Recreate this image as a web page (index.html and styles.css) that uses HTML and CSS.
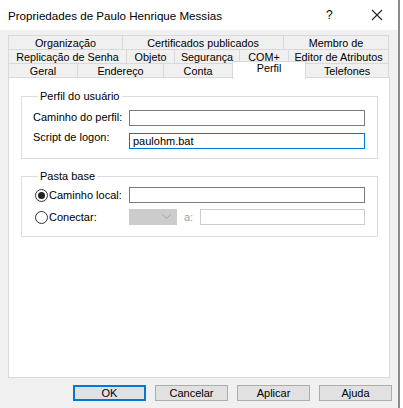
FILE: index.html
```html
<!DOCTYPE html>
<html lang="pt-BR">
<head>
<meta charset="utf-8">
<title>Propriedades de Paulo Henrique Messias</title>
<link rel="stylesheet" href="styles.css">
</head>
<body>
<div class="window">
  <div class="titlebar">
    <span class="title">Propriedades de Paulo Henrique Messias</span>
    <span class="help">?</span>
    <span class="close">
      <svg width="12" height="12" viewBox="0 0 12 12"><path d="M1 1 L11 11 M11 1 L1 11" stroke="#222" stroke-width="1.1" fill="none"/></svg>
    </span>
  </div>
  <div class="body">
    <div class="tabs">
      <div class="tabrow">
        <div class="tab w114">Organização</div>
        <div class="tab w162">Certificados publicados</div>
        <div class="tab w106">Membro de</div>
      </div>
      <div class="tabrow">
        <div class="tab w118">Replicação de Senha</div>
        <div class="tab w49">Objeto</div>
        <div class="tab w66">Segurança</div>
        <div class="tab w50">COM+</div>
        <div class="tab w101">Editor de Atributos</div>
      </div>
      <div class="tabrow">
        <div class="tab w69">Geral</div>
        <div class="tab w87">Endereço</div>
        <div class="tab w70">Conta</div>
        <div class="tab w74 active">Perfil</div>
        <div class="tab w84">Telefones</div>
      </div>
    </div>
    <div class="panel">
      <fieldset class="group g1">
        <legend>Perfil do usuário</legend>
        <div class="row">
          <span class="label">Caminho do perfil:</span>
          <span class="input dark"></span>
        </div>
        <div class="row r2">
          <span class="label raised">Script de logon:</span>
          <span class="input focus">paulohm.bat</span>
        </div>
      </fieldset>
      <fieldset class="group g2">
        <legend>Pasta base</legend>
        <div class="row">
          <span class="label radio-label"><span class="radio checked"></span>Caminho local:</span>
          <span class="input dark"></span>
        </div>
        <div class="row r2">
          <span class="label radio-label"><span class="radio"></span>Conectar:</span>
          <span class="combo">
            <svg width="9" height="6" viewBox="0 0 9 6"><path d="M0.5 0.5 L4.5 4.5 L8.5 0.5" stroke="#a6a6a6" stroke-width="1" fill="none"/></svg>
          </span>
          <span class="a-label">a:</span>
          <span class="input disabled"></span>
        </div>
      </fieldset>
    </div>
    <div class="buttons">
      <span class="btn default">OK</span>
      <span class="btn">Cancelar</span>
      <span class="btn">Aplicar</span>
      <span class="btn">Ajuda</span>
    </div>
  </div>
</div>
</body>
</html>
```
FILE: styles.css
```css
html, body {
  margin: 0;
  padding: 0;
  background: #ffffff;
}
body {
  width: 403px;
  height: 408px;
  overflow: hidden;
  font-family: "Liberation Sans", Arial, sans-serif;
  font-size: 11px;
  color: #000;
}
.window {
  width: 398px;
  height: 408px;
  background: #f0f0f0;
  border-right: 2px solid #8c8c8c;
  display: flex;
  flex-direction: column;
}
.titlebar {
  height: 30px;
  background: #ffffff;
  display: flex;
  align-items: center;
  padding-left: 8px;
  flex-shrink: 0;
}
.title {
  font-size: 11.6px;
  flex: 1;
}
.help {
  font-size: 12px;
  width: 45px;
  text-align: left;
}
.close {
  width: 27px;
  display: flex;
  align-items: center;
}
.body {
  padding: 5px 7px 0 8px;
  display: flex;
  flex-direction: column;
}
.tabs {
  display: flex;
  flex-direction: column;
  width: 381px;
}
.tabrow {
  display: flex;
  height: 15px;
  margin-bottom: -1px;
}
.tab {
  box-sizing: border-box;
  height: 15px;
  border: 1px solid #d9d9d9;
  background: #f0f0f0;
  margin-right: -1px;
  text-align: center;
  line-height: 14px;
  font-size: 10.8px;
  white-space: nowrap;
  overflow: hidden;
}
.tab.active {
  position: relative;
  z-index: 1;
  background: #ffffff;
  height: 18px;
  margin-top: -2px;
  border-bottom: none;
  line-height: 13px;
}
.w114 { width: 115px; }
.w162 { width: 162px; }
.w106 { width: 106px; }
.w118 { width: 119px; }
.w49 { width: 49px; }
.w66 { width: 66px; }
.w50 { width: 50px; }
.w101 { width: 101px; }
.w69 { width: 70px; }
.w87 { width: 87px; }
.w70 { width: 70px; }
.w74 { width: 74px; }
.w84 { width: 84px; }
.panel {
  box-sizing: border-box;
  width: 382px;
  height: 301px;
  background: #ffffff;
  border: 1px solid #d9d9d9;
  padding-top: 12px;
}
.group {
  box-sizing: border-box;
  margin: 0 11px 0 12px;
  border: 1px solid #dcdcdc;
  padding: 8px 12px 9px 11px;
}
.group legend {
  padding: 0 2px;
  margin-left: 5px;
  font-size: 11px;
}
.g2 {
  margin-top: 11px;
  padding-top: 5px;
  padding-bottom: 11px;
}
.row {
  display: flex;
  align-items: center;
  height: 16px;
}
.row.r2 {
  margin-top: 7px;
}
.g2 .row.r2 {
  margin-top: 6px;
}
.label {
  width: 96px;
  flex-shrink: 0;
  position: relative;
  top: -1px;
}
.label.raised {
  top: -4px;
}
.radio-label {
  display: flex;
  align-items: center;
  margin-left: 2px;
  width: 94px;
  top: 0;
}
.radio {
  box-sizing: border-box;
  width: 13px;
  height: 13px;
  border: 1px solid #333;
  border-radius: 50%;
  margin-right: 1px;
  display: flex;
  align-items: center;
  justify-content: center;
}
.radio.checked::after {
  content: "";
  width: 7px;
  height: 7px;
  border-radius: 50%;
  background: #222;
}
.input {
  box-sizing: border-box;
  flex: 1;
  height: 16px;
  border: 1px solid #7a7a7a;
  background: #fff;
  padding-left: 3px;
  line-height: 14px;
}
.input.focus {
  border-color: #0078d7;
}
.input.disabled {
  border-color: #cccccc;
}
.combo {
  box-sizing: border-box;
  width: 48px;
  height: 16px;
  background: #cccccc;
  border: 1px solid #cccccc;
  display: flex;
  align-items: center;
  justify-content: flex-end;
  padding-right: 5px;
  flex-shrink: 0;
}
.a-label {
  color: #a0a0a0;
  width: 23px;
  padding-left: 7px;
  box-sizing: border-box;
  flex-shrink: 0;
}
.buttons {
  display: flex;
  justify-content: flex-end;
  gap: 9px;
  margin-top: 7px;
  width: 384px;
}
.btn {
  box-sizing: border-box;
  width: 73px;
  height: 16px;
  background: #e1e1e1;
  border: 1px solid #adadad;
  text-align: center;
  line-height: 14px;
  font-size: 11px;
}
.btn.default {
  border: 2px solid #0078d7;
  line-height: 12px;
}
```
